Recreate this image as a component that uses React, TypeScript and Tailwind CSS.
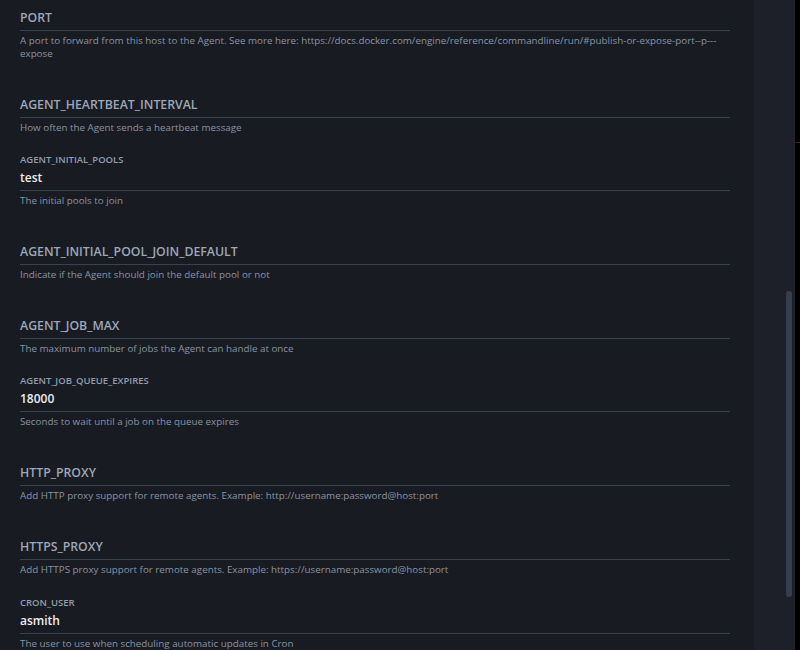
import React from "react";

type Item =
  | { kind: "h"; title: string; desc: string[] }
  | { kind: "v"; label: string; value: string; desc: string[] };

const items: Item[] = [
  {
    kind: "h",
    title: "PORT",
    desc: [
      "A port to forward from this host to the Agent. See more here: https://docs.docker.com/engine/reference/commandline/run/#publish-or-expose-port--p---",
      "expose",
    ],
  },
  { kind: "h", title: "AGENT_HEARTBEAT_INTERVAL", desc: ["How often the Agent sends a heartbeat message"] },
  { kind: "v", label: "AGENT_INITIAL_POOLS", value: "test", desc: ["The initial pools to join"] },
  { kind: "h", title: "AGENT_INITIAL_POOL_JOIN_DEFAULT", desc: ["Indicate if the Agent should join the default pool or not"] },
  { kind: "h", title: "AGENT_JOB_MAX", desc: ["The maximum number of jobs the Agent can handle at once"] },
  { kind: "v", label: "AGENT_JOB_QUEUE_EXPIRES", value: "18000", desc: ["Seconds to wait until a job on the queue expires"] },
  { kind: "h", title: "HTTP_PROXY", desc: ["Add HTTP proxy support for remote agents. Example: http://username:password@host:port"] },
  { kind: "h", title: "HTTPS_PROXY", desc: ["Add HTTPS proxy support for remote agents. Example: https://username:password@host:port"] },
  { kind: "v", label: "CRON_USER", value: "asmith", desc: ["The user to use when scheduling automatic updates in Cron"] },
];

function Desc({ lines }: { lines: string[] }) {
  return (
    <div className="mt-[3px] text-[9.8px] leading-[13px] text-[#8a93a4]">
      {lines.map((l, i) => (
        <div key={i} className="whitespace-nowrap">{l}</div>
      ))}
    </div>
  );
}

export default function App() {
  return (
    <div
      className="flex w-[800px] h-[650px] overflow-hidden bg-black"
      style={{ fontFamily: '"Open Sans", "Noto Sans", sans-serif' }}
    >
      <div className="w-[754px] h-full bg-[#181b22] pl-[20px] pt-[7px] overflow-hidden">
        <div className="w-[710px] flex flex-col">
          {items.map((it, idx) =>
            it.kind === "h" ? (
              <div key={idx} className={idx === 0 ? "" : "pt-[33.7px]"}>
                <div className="border-b border-[#3a4150] pb-[2px]">
                  <div className="text-[12.3px] leading-[21px] font-semibold text-[#9ea7b8]">
                    {it.title}
                  </div>
                </div>
                <Desc lines={it.desc} />
              </div>
            ) : (
              <div key={idx} className="pt-[19.7px]">
                <div className="text-[9.5px] leading-[13px] font-semibold text-[#939cac]">{it.label}</div>
                <div className="border-b border-[#3a4150] pb-[3px] mt-[3px]">
                  <div className="text-[12px] leading-[18px] font-semibold text-[#eceef2]">{it.value}</div>
                </div>
                <Desc lines={it.desc} />
              </div>
            )
          )}
        </div>
      </div>
      <div className="w-[41px] h-full bg-[#1d2029] relative">
        <div className="absolute left-[32px] top-[291px] w-[6px] h-[306px] rounded-full bg-[#363e4f]" />
      </div>
      <div className="w-[5px] h-full bg-black relative">
        <div className="absolute left-0 top-[142px] w-[5px] h-[1px] bg-[#4a1a1f]" />
      </div>
    </div>
  );
}
